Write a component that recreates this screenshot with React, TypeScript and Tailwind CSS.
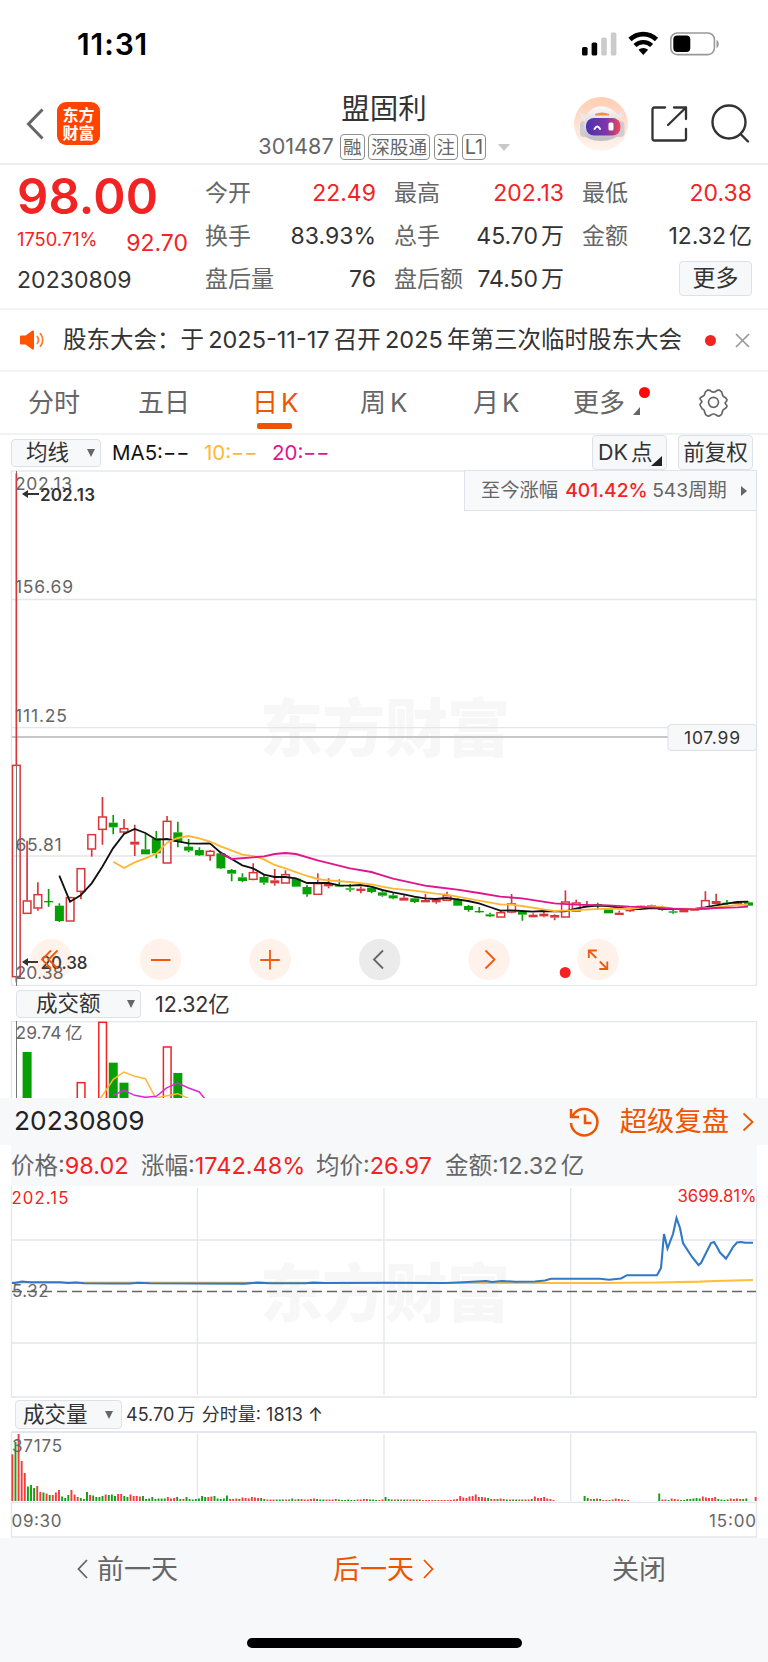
import type { ReactNode } from 'react'

type Tone = 'r' | 'g'

const RED = '#d9363a'
const GREEN = '#06a006'
const GRID = '#e3e6ec'

// Candles: tone, high, body top, body bottom, low (3 units per pixel)
const CANDLES: [Tone, number, number, number, number][] = [
  ['r', -800, 75, 711, 727], ['r', 302, 482, 521, 521], ['r', 427, 463, 505, 512],
  ['g', 447, 483, 486, 500], ['g', 490, 497, 543, 546], ['r', 470, 472, 544, 544],
  ['r', 385, 385, 455, 478], ['r', 283, 283, 328, 350], ['r', 171, 230, 269, 314],
  ['g', 225, 248, 262, 283], ['r', 237, 265, 277, 283], ['r', 254, 305, 314, 348],
  ['g', 280, 328, 343, 343], ['g', 273, 295, 340, 355], ['r', 228, 243, 370, 370],
  ['g', 245, 277, 305, 322], ['g', 297, 320, 332, 337], ['g', 322, 330, 346, 348],
  ['r', 330, 333, 347, 362], ['g', 335, 340, 385, 387], ['g', 387, 390, 401, 424],
  ['g', 400, 412, 423, 427], ['r', 370, 397, 419, 421], ['g', 405, 411, 428, 434],
  ['r', 387, 421, 430, 437], ['r', 391, 403, 430, 430], ['g', 414, 416, 440, 440],
  ['g', 435, 441, 463, 470], ['r', 400, 430, 464, 464], ['r', 415, 430, 439, 445],
  ['g', 418, 436, 440, 440], ['g', 432, 445, 449, 455], ['r', 440, 446, 453, 460],
  ['g', 440, 443, 456, 460], ['g', 452, 457, 467, 470], ['g', 460, 466, 475, 478],
  ['r', 466, 473, 482, 482], ['g', 472, 475, 486, 489], ['r', 462, 480, 487, 487],
  ['r', 475, 479, 487, 491], ['r', 455, 466, 482, 482], ['g', 475, 480, 497, 497],
  ['g', 495, 498, 510, 515], ['g', 501, 513, 516, 518], ['g', 518, 523, 529, 531],
  ['r', 510, 517, 532, 532], ['r', 462, 491, 517, 520], ['g', 512, 516, 524, 542],
  ['r', 520, 524, 532, 532], ['r', 512, 521, 529, 532], ['r', 523, 525, 533, 541],
  ['r', 451, 485, 532, 532], ['r', 479, 488, 514, 514], ['r', 483, 497, 500, 502],
  ['g', 488, 492, 497, 508], ['g', 506, 508, 520, 520], ['r', 512, 518, 525, 525],
  ['r', 507, 509, 514, 516], ['r', 496, 497, 502, 502], ['g', 494, 496, 500, 500],
  ['g', 497, 506, 510, 512], ['g', 508, 514, 517, 521], ['r', 508, 510, 517, 517],
  ['r', 505, 507, 512, 512], ['r', 454, 481, 507, 509], ['r', 461, 483, 492, 492],
  ['g', 480, 488, 491, 494], ['r', 483, 485, 492, 494], ['g', 484, 487, 497, 497],
]

const MA5 =
  '178,407 210,485 242,466 275,430 307,380 339,325 372,282 404,267 436,279 469,299 501,297 533,304 566,310 598,311 630,310 662,338 695,357 727,376 759,385 792,404 824,411 856,411 888,415 921,429 985,429 1018,436 1050,437 1082,435 1114,440 1147,450 1179,457 1211,463 1243,470 1275,475 1307,477 1340,474 1372,478 1404,483 1437,490 1469,501 1501,512 1534,511 1566,513 1598,515 1630,513 1695,514 1727,506 1760,500 1792,497 1824,498 1857,503 1889,507 1921,507 1953,504 2018,507 2083,507 2115,502 2147,496 2180,491 2212,486 2244,485'
const MA10 =
  '340,365 372,384 404,367 436,355 469,341 501,308 533,294 566,288 598,295 630,305 662,319 727,344 759,348 792,358 824,375 856,385 921,408 953,417 985,421 1050,426 1114,433 1147,440 1179,446 1243,452 1307,461 1340,464 1372,470 1437,482 1501,493 1534,494 1566,498 1630,508 1663,513 1695,512 1760,509 1824,506 1889,507 1953,499 1986,501 2018,505 2083,507 2147,502 2212,495 2244,493'
const MA20 =
  '662,340 695,357 759,352 792,349 824,342 856,339 888,342 953,361 1050,385 1114,396 1147,406 1179,416 1275,437 1307,441 1372,449 1437,459 1501,470 1566,475 1663,490 1727,494 1824,496 1889,500 1953,502 2018,506 2083,508 2147,504 2212,502 2244,500'

const PRICE =
  '12,97 15,97 22,95.5 30,96.3 60,96.3 68,97 76,96.5 84,97.2 113,97.5 130,97.5 138,96.7 150,97.2 245,97.6 258,96.6 270,97.3 305,97.2 313,96.6 325,97 384,96.7 445,97 463,96.2 486,95 492,96 502,95 515,95.7 535,95.5 545,94.5 551,92.7 600,92.8 609,93.7 621,92.5 627,89.2 657,89.2 661,82 664,48 667.5,62.5 673,48 676.5,32 680,42 683,57 692,71 698.5,79 701,77 705,69 711,57 714,56 717,61 720,66.5 726,72.5 729,68 733,61 737,56.5 741,56 745,56.7 753,56.7'

// Per-minute turnover: tone + height, "-" for a minute with no trade
const MINUTES =
  'r46.7 g59 r67 r40 r28 g14.5 g16 g13 r15 r9 g8.5 r7.5 g6 r6 r8.5 r11 g4.5 g3 g6 r11 r6.5 r4 g3 g2 g9 r6 g5.5 g4 g4 g5 r6.5 g6 g6.5 g5 r7 r7 g5 g4 r6.5 r5 r5 r4.5 g5 g2 g2.5 g4 g2 g2.5 g2.5 g2.5 r4 r2.5 r3 g4 g2 r2 g4 g2 g1.5 g2 g2.5 g5 g4 r4 r4.5 g5 g2.5 g2 g2.5 g5.5 r2 r2 r2.5 g2 r3.5 r3 r2.5 r4 r3.5 r3 g3 g2 r1.5 r1.5 r1.5 g1.5 g1.5 g1.5 r1.5 g1.5 g2.5 r1.5 g2 r2 r1.5 r1.5 r2 r2.5 g2 g1.5 g1.5 r1.5 r1.5 r1.5 r2 g1.5 g1 g1 g1.5 g1 g1 r1.5 r1.5 r2 r2 g1.5 g1.5 g1 r1 r1.5 g4 g2 g1.5 r1.5 g1.5 r1.5 g1.5 r1.5 r1.5 g1.5 r1.5 g1.5 r1 r1 r1 r1 g1 r1 r1 r1 r1 r1 r1.5 r2 r5 r3.5 r3 r4.5 r5 r6.5 r4 r4 r3.5 g3 r2 r2 g2 r2.5 r2 g1.5 r1.5 g1.5 g1.5 r1.5 g1.5 r1.5 r1.5 g2 r4.5 r3 r3 r4 r2.5 r2 r1 - - - - - - - - - g5 g3 r2 g2 r2.5 g2 r1 r1 g1 r1.5 r2.5 r2 r1.5 g1 r1 - - - - - - - - - g7.5 r1.5 r1.5 g1 r2.5 r2 r1.5 g1 g1 g2 g2 g2.5 g3 g2.5 r4.5 r3.5 r3 r3 r4 g2 g1.5 g1 g1.5 r2.5 r2 r2.5 r2 g2 g2.5 - - r4'

const QUOTE: { label: string; value: string; unit?: string; red?: boolean }[] = [
  { label: '今开', value: '22.49', red: true },
  { label: '最高', value: '202.13', red: true },
  { label: '最低', value: '20.38', red: true },
  { label: '换手', value: '83.93%' },
  { label: '总手', value: '45.70', unit: '万' },
  { label: '金额', value: '12.32', unit: '亿' },
  { label: '盘后量', value: '76' },
  { label: '盘后额', value: '74.50', unit: '万' },
]

function StatusBar() {
  return (
    <div className="flex h-[84px] items-start justify-between pt-[29px] pr-[48px] pl-[77px]">
      <span className="text-[30px] leading-[30px] font-semibold tracking-[0.900px] text-black">11:31</span>
      <svg width="138" height="30" viewBox="582 29 138 30">
        <rect x="582" y="47" width="5.6" height="8.5" rx="1.6" />
        <rect x="591.6" y="42.5" width="5.6" height="13" rx="1.6" />
        <rect x="601.2" y="37.5" width="5.6" height="18" rx="1.6" fill="#cbcbcb" />
        <rect x="610.8" y="32.5" width="5.6" height="23" rx="1.6" fill="#cbcbcb" />
        <path d="M630 39.500a19 19 0 0 1 26.500 0" fill="none" stroke="#000" strokeWidth="4.600" />
        <path d="M635 45.500a12 12 0 0 1 16.600 0" fill="none" stroke="#000" strokeWidth="4.400" />
        <path d="M638.500 49.800a7 7 0 0 1 9.600 0L643.300 55z" />
        <rect x="670.800" y="33" width="43.600" height="21.600" rx="6.500" fill="none" stroke="#999" strokeWidth="1.600" />
        <rect x="673.300" y="35.500" width="17" height="16.600" rx="4" />
        <path d="M716.500 40v8c3-1 3-7 0-8z" fill="#999" />
      </svg>
    </div>
  )
}

function Robot() {
  return (
    <svg width="54" height="54" viewBox="0 0 54 54">
      <defs>
        <linearGradient id="halo" x2="0" y2="1">
          <stop stopColor="#ffcdb2" />
          <stop offset="1" stopColor="#fff5f0" />
        </linearGradient>
        <linearGradient id="visor">
          <stop stopColor="#4a32b0" />
          <stop offset=".6" stopColor="#8036a8" />
          <stop offset="1" stopColor="#f04858" />
        </linearGradient>
        <linearGradient id="shell" x2="0" y2="1">
          <stop stopColor="#fbf9f9" />
          <stop offset="1" stopColor="#bdbbc2" />
        </linearGradient>
      </defs>
      <circle cx="27" cy="27" r="27" fill="url(#halo)" />
      <path d="M6 13q1 5 7 5l-2 6Q4 19 6 13zM48 13q-1 5-7 5l2 6q7-5 5-11z" fill="#ece8e8" />
      <rect x="6" y="24" width="9" height="16" rx="4" fill="#cfccd2" />
      <rect x="41" y="24" width="9.500" height="16" rx="4" fill="#cfccd2" />
      <path d="M10.500 25Q13 10 27 9.500 43 10 46 25l.5 11q-6 8-19.500 8T8.500 36z" fill="url(#shell)" />
      <path d="M21 17q7-3 14 0v1.500H21z" fill="#ef9048" />
      <rect x="12" y="21" width="34.500" height="17.500" rx="8" fill="url(#visor)" />
      <path d="M20.500 32q2.800-5 5.600 0" fill="none" stroke="#fff" strokeWidth="1.800" strokeLinecap="round" />
      <rect x="34.500" y="25.500" width="5" height="8" rx="1.500" fill="#fff" />
    </svg>
  )
}

function Tag({ children }: { children: ReactNode }) {
  return (
    <span className="flex h-[26px] items-center rounded-[4px] border border-[#8f8f8f] px-[2px] text-[18.600px] leading-none text-[#666]">
      {children}
    </span>
  )
}

function Header() {
  return (
    <header className="grid h-[81px] grid-cols-[240px_1fr_240px] border-b-2 border-[#ececec]">
      <div className="flex items-start pt-[18px] pl-[26px]">
        <svg className="mt-[6px] mr-[13px]" width="18" height="32" viewBox="0 0 18 32" fill="none" stroke="#666" strokeWidth="3">
          <path d="M16.500 1.500 2.500 16l14 14.500" />
        </svg>
        <div className="flex h-[43px] w-[43px] flex-col items-center justify-center rounded-[9px] bg-[#ff4400] text-[16px] leading-[18px] font-bold text-white">
          <span>东方</span>
          <span>财富</span>
        </div>
      </div>
      <div className="flex flex-col items-center pt-[10px]">
        <h1 className="text-[28.500px] leading-[30px] text-[#333]">盟固利</h1>
        <div className="mt-[10px] flex items-center gap-[3.500px] text-[#666]">
          <span className="mr-[3px] text-[21.600px] leading-none">301487</span>
          <Tag>融</Tag>
          <Tag>深股通</Tag>
          <Tag>注</Tag>
          <Tag>
            <span className="text-[20px]">L1</span>
          </Tag>
          <svg className="ml-[8px]" width="12" height="7" viewBox="0 0 12 7" fill="#c8c8c8">
            <path d="M0 0h12L6 7z" />
          </svg>
        </div>
      </div>
      <div className="flex items-start pt-[13px] pl-[46px]">
        <Robot />
        <svg className="mt-[8px] ml-[22px]" width="38" height="38" viewBox="0 0 38 38" fill="none" stroke="#333" strokeWidth="2.300" strokeLinecap="round" strokeLinejoin="round">
          <path d="M15 2.500H4.500q-2 0-2 2v29q0 2 2 2h29.500q2 0 2-2V24M24 2.500h12V14M36 2.500 18 20" />
        </svg>
        <svg className="mt-[7px] ml-[23px]" width="39" height="40" viewBox="0 0 39 40" fill="none" stroke="#333" strokeWidth="2.400" strokeLinecap="round">
          <circle cx="18" cy="18" r="16.500" />
          <path d="m29.500 30 7.500 7.500" />
        </svg>
      </div>
    </header>
  )
}

function Quote() {
  return (
    <section className="flex h-[145px] border-b-2 border-[#f4f4f4]">
      <div className="w-[188px] shrink-0 pt-[8px] pl-[17px]">
        <div className="text-[49px] leading-[48px] font-semibold tracking-[0.100px] text-[#f22323]">98.00</div>
        <div className="mt-[8px] flex h-[28px] items-center justify-between text-[#f22323]">
          <span className="mt-[-8px] text-[18.300px] leading-none">1750.71%</span>
          <span className="text-[23px] leading-none">92.70</span>
        </div>
        <div className="mt-[10px] text-[23px] leading-[26px] tracking-[0.050px] text-[#333]">20230809</div>
      </div>
      <div className="ml-[17px] grid w-[548px] grid-cols-[171px_170px_170px] grid-rows-[43px_43px_43px] gap-x-[18px] pt-[7px]">
        {QUOTE.map((q) => (
          <div key={q.label} className="flex items-center justify-between text-[23px] leading-none whitespace-nowrap">
            <span className="text-[#666]">{q.label}</span>
            <span className={q.red ? 'text-[#f22323]' : 'text-[#333]'}>
              {q.value}
              {q.unit && <span className="ml-[3px]">{q.unit}</span>}
            </span>
          </div>
        ))}
        <div className="flex items-center justify-end">
          <button className="-mt-[3px] h-[35px] w-[73px] rounded-[4px] border border-[#dde1e8] bg-[#f7f8fa] text-[23px] leading-none text-[#333]">
            更多
          </button>
        </div>
      </div>
    </section>
  )
}

function Notice() {
  return (
    <section className="flex h-[62px] items-center border-b-2 border-[#f4f4f4] pl-[20px]">
      <svg width="24" height="20" viewBox="0 0 24 20" fill="#ff5500">
        <path d="M1 5.500h4.500L12.500.5q1.500-.5 1.500 1v17q0 1.500-1.500 1L5.500 14.500H1q-1 0-1-1v-7q0-1 1-1z" />
        <path d="M17 6q3 4 0 8M20 3q5.500 7 0 14" fill="none" stroke="#ff7a30" strokeWidth="1.700" />
      </svg>
      <span className="ml-[19px] w-[619px] text-[23.500px] leading-none whitespace-nowrap text-[#333] [word-spacing:-2.400px]">
        股东大会：于 2025-11-17 召开 2025 年第三次临时股东大会
      </span>
      <span className="ml-[23px] h-[11px] w-[11px] rounded-full bg-[#f22323]" />
      <svg className="ml-[19px]" width="15" height="15" viewBox="0 0 15 15" stroke="#999" strokeWidth="1.700">
        <path d="m1 1 13 13M14 1 1 14" />
      </svg>
    </section>
  )
}

function Tabs() {
  const tab = 'relative w-[110px] shrink-0 text-[26px] leading-[62px] text-[#666]'
  return (
    <nav className="flex h-[63px] border-b-2 border-[#f2f2f2] pl-[28px]">
      <span className={tab}>分时</span>
      <span className={tab}>五日</span>
      <span className="relative ml-[4px] w-[108px] shrink-0 text-[26px] leading-[62px] text-[#ee5500]">
        日<span className="ml-[3px]">K</span>
        <i className="absolute bottom-[4px] left-[5px] h-[6px] w-[35px] rounded-[2px] bg-[#ee5500]" />
      </span>
      <span className={tab}>
        周<span className="ml-[4px]">K</span>
      </span>
      <span className="relative ml-[3px] w-[100px] shrink-0 text-[26px] leading-[62px] text-[#666]">
        月<span className="ml-[3px]">K</span>
      </span>
      <span className={tab}>
        更多
        <i className="absolute top-[15px] left-[66px] h-[10.500px] w-[10.500px] rounded-full bg-[#ff0a0a]" />
        <svg className="absolute top-[35px] left-[60px]" width="7" height="8" viewBox="0 0 7 8" fill="#666">
          <path d="M7 0v8H0z" />
        </svg>
      </span>
      <svg className="mt-[16px] ml-[15px]" width="31" height="30" viewBox="0 0 31 30" fill="none" stroke="#666" strokeWidth="1.700">
        <path strokeLinejoin="round" d="M9.500 2.200q2.200-.5 3.500 1 2.500 1.800 5 0 1.300-1.500 3.500-1 2.500 1.200 2.700 3.300.2 3 2.600 3.800 1.700 1 2.200 2.500 0 1-1.300 2.300-1.200 1 0 2 1.300 1.200 1.300 2.200-.5 1.500-2.200 2.500-2.400.8-2.600 3.800-.2 2.100-2.700 3.300-2.200.5-3.500-1-2.500-1.800-5 0-1.300 1.500-3.500 1-2.500-1.200-2.700-3.300-.2-3-2.600-3.800Q2.500 18.300 2 16.800q0-1 1.300-2.200 1.200-1 0-2Q2 11.300 2 10.300q.5-1 2.200-1.700 2.400-.6 2.600-3.100.2-2.100 2.700-3.300z" />
        <circle cx="15.500" cy="14.300" r="5" />
      </svg>
    </nav>
  )
}

const selectBox =
  'flex shrink-0 items-center justify-between rounded-[4px] border border-[#dde1e8] bg-[#f7f8fa] leading-none text-[#333] text-[21.500px]'

function Caret() {
  return (
    <svg width="8" height="8" viewBox="0 0 8 8" fill="#666">
      <path d="M0 0h8L4 8z" />
    </svg>
  )
}

function MaBar() {
  const mas = [
    { name: 'MA5:', tone: 'w-[92px] text-[#111]' },
    { name: '10:', tone: 'w-[68px] text-[#ffb733]' },
    { name: '20:', tone: 'text-[#e0148c]' },
  ]
  return (
    <div className="flex h-[35px] items-center pr-[15px] pl-[11px]">
      <div className={`${selectBox} mt-px h-[28px] w-[90px] pr-[5px] pl-[14px]`}>
        均线
        <Caret />
      </div>
      <div className="mt-[2px] ml-[11px] flex text-[20.500px] leading-none whitespace-nowrap">
        {mas.map((m) => (
          <span key={m.name} className={m.tone}>
            {m.name}
            <span className="inline-block origin-left scale-x-[1.400]">--</span>
          </span>
        ))}
      </div>
      <div className="ml-auto flex h-full gap-[11px]">
        <div className={`${selectBox} relative h-full w-[75px] justify-start pl-[5px]`}>
          DK<span className="ml-[3px]">点</span>
          <svg className="absolute right-[4px] bottom-[3px]" width="11" height="10" viewBox="0 0 11 10" fill="#222">
            <path d="M11 0v10H0z" />
          </svg>
        </div>
        <div className={`${selectBox} h-full w-[75px]`}>
          <span className="mx-auto">前复权</span>
        </div>
      </div>
    </div>
  )
}

function Watermark({ y }: { y: number }) {
  return (
    <text x="260" y={y} textLength="250" fontSize="63" fontWeight="900" fill="#f7f7f7" fontFamily="Noto Sans CJK SC">
      东方财富
    </text>
  )
}

function CandleChart() {
  return (
    <div className="relative h-[516px]">
      <svg className="block" width="768" height="516" viewBox="0 470 768 516" fill="none">
        <Watermark y={751} />
        <g stroke={GRID} strokeWidth="1.300">
          <path d="M11.500 599.500h745M11.500 727.700h745M11.500 856h745" />
          <rect x="11.500" y="471" width="745" height="514.500" />
        </g>
        <path d="M12 737h656" stroke="#b5b5b5" strokeWidth="1.300" />
        <path d="M16.500 471v515" stroke="#777" />
        <g transform="translate(0 740) scale(.33333)">
          {CANDLES.map(([tone, high, top, bottom, low], i) => {
            const x = 49 + 32.3 * i
            const hollow = tone === 'r' && bottom - top > 9
            const color = tone === 'r' ? RED : GREEN
            return (
              <g key={i} stroke={color}>
                <path d={`M${x} ${high}V${top}M${x} ${bottom}V${low}`} strokeWidth="5" />
                {hollow ? (
                  <rect x={x - 11.5} y={top + 1} width="23" height={bottom - top - 2} strokeWidth="4.500" />
                ) : (
                  <rect x={x - 13.5} y={top} width="27" height={Math.max(bottom - top, 4)} fill={color} stroke="none" />
                )}
              </g>
            )
          })}
          <polyline points={MA5} stroke="#111" strokeWidth="5.500" />
          <polyline points={MA10} stroke="#ffb733" strokeWidth="5.500" />
          <polyline points={MA20} stroke="#e0148c" strokeWidth="5.500" />
        </g>
        <path d="M16.500 765v221" stroke="#777" />
        <g fill="#666" fontSize="17.500">
          <text x="15" y="490" textLength="57">202.13</text>
          <text x="15" y="593" textLength="58">156.69</text>
          <text x="15" y="722" textLength="52">111.25</text>
          <text x="15.500" y="850.500" textLength="46">65.81</text>
          <text x="15.500" y="979" textLength="48">20.38</text>
        </g>
        <g fill="#333" fontSize="17" fontWeight="600">
          <text x="40" y="500.500" textLength="55">202.13</text>
          <text x="40.500" y="968.500" textLength="47" fontWeight="500">20.38</text>
        </g>
        <path d="M23 494h16M23 962h15" stroke="#333" strokeWidth="1.800" />
        <path d="m22 494 6-4v8zM22 962l6-4v8z" fill="#333" />
        <rect x="668" y="724.500" width="88.500" height="26" rx="3" fill="#f7f8fa" stroke="#dcdfe5" />
        <text x="684" y="744" textLength="56" fill="#333" fontSize="17.500">107.99</text>
        <g fill="#ee5500" fillOpacity=".08">
          <circle cx="51.300" cy="959.500" r="20.700" />
          <circle cx="160.500" cy="959.500" r="20.700" />
          <circle cx="270.300" cy="959.500" r="20.700" />
          <circle cx="489" cy="959.500" r="20.700" />
          <circle cx="598.200" cy="959.500" r="20.700" />
        </g>
        <circle cx="379.700" cy="959.500" r="20.700" fill="#ebebeb" />
        <g stroke="#ee5a10" strokeWidth="1.800">
          <path d="m51 950.500-9 9 9 9M57.500 950.500l-9 9 9 9" />
          <path d="M151 960h19.500M260.300 960h19.500M270 950v19.500" />
          <path d="m485.500 950.500 9 9-9 9" />
          <path d="M588.800 958v-7.500h8M588.800 950.500l7.500 7.500M607.300 961.500v7.500h-8M607.300 969l-7.500-7.500" />
        </g>
        <path d="m383 950.500-9 9 9 9" stroke="#666" strokeWidth="1.800" />
        <circle cx="565.200" cy="972.500" r="5.500" fill="#f22323" />
      </svg>
      <div className="absolute top-0 right-[11px] flex h-[41px] w-[293px] items-center border border-[#e0e3ea] bg-[#f8f9fb] pl-[16px] text-[19.300px] leading-none whitespace-nowrap text-[#666]">
        至今涨幅
        <b className="mx-[7px] w-[80px] font-medium text-[#f22323]">401.42%</b>
        543周期
        <svg className="ml-[14px]" width="6" height="10" viewBox="0 0 6 10" fill="#666">
          <path d="M0 0v10l6-5z" />
        </svg>
      </div>
    </div>
  )
}

function TurnoverPane() {
  const bars: [number, Tone, number][] = [
    [1, 'g', 366], [6, 'r', 458], [8, 'r', 277], [9, 'g', 398], [10, 'g', 458], [14, 'r', 351], [15, 'g', 429],
  ]
  return (
    <>
      <div className="flex h-[35px] items-center pl-[16px]">
        <div className={`${selectBox} mt-px h-[28px] w-[125px] pr-[5px] pl-[19px]`}>
          成交额
          <Caret />
        </div>
        <span className="mt-[2px] ml-[14px] text-[21.500px] leading-none tracking-[-0.100px] text-[#333]">12.32亿</span>
      </div>
      <svg className="block" width="768" height="77" viewBox="0 1021 768 77" fill="none">
        <path d="M11.500 1098v-76.500h745v76.500" stroke={GRID} strokeWidth="1.300" />
        <path d="M16.500 1021v77" stroke="#777" />
        <text x="15.500" y="1039" textLength="46" fill="#666" fontSize="17.500">29.74</text>
        <text x="65" y="1039" fill="#666" fontSize="17.500">亿</text>
        <g transform="translate(0 930) scale(.33333)">
          {bars.map(([i, tone, top]) =>
            tone === 'g' ? (
              <rect key={i} x={35.5 + 32.3 * i} y={top} width="27" height="200" fill={GREEN} />
            ) : (
              <rect key={i} x={38 + 32.3 * i} y={top} width="23" height="260" stroke="#f22323" strokeWidth="4.500" />
            ),
          )}
          <polyline points="301,506 340,448 372,426 404,439 436,446 467,504 501,497 533,491 568,506" stroke="#ffb733" strokeWidth="4.500" />
          <polyline points="340,496 372,481 404,496 436,502 469,499 501,473 533,459 566,474 598,486 614,506" stroke="#dc28dc" strokeWidth="4.500" />
        </g>
      </svg>
    </>
  )
}

function DayHeader() {
  const stats = [
    { label: '价格', value: '98.02', box: 'w-[130px]', tone: 'text-[#f22323]' },
    { label: '涨幅', value: '1742.48%', box: 'w-[175px]', tone: 'text-[#f22323]' },
    { label: '均价', value: '26.97', box: 'w-[129px]', tone: 'text-[#f22323]' },
    { label: '金额', value: '12.32', unit: '亿', box: '', tone: '' },
  ]
  return (
    <>
      <div className="flex h-[47px] items-center bg-[#f7f8fa] pr-[14px] pl-[14px]">
        <span className="text-[26.300px] leading-none text-[#222]">20230809</span>
        <svg className="ml-auto" width="32" height="32" viewBox="0 0 32 32" fill="none" stroke="#ee5500" strokeWidth="2.500">
          <path d="M4.500 10A13.200 13.200 0 1 1 3 17M3 3v8h8M17 8.500V17h6.500" />
        </svg>
        <span className="ml-[20px] text-[27.300px] leading-none text-[#ee5500]">超级复盘</span>
        <svg className="ml-[13px]" width="12" height="20" viewBox="0 0 12 20" fill="none" stroke="#ee5500" strokeWidth="1.800">
          <path d="m1.500 1.500 9 8.500-9 8.500" />
        </svg>
      </div>
      <div className="mx-[11px] flex h-[41px] items-center bg-[#f7f8fa] text-[23.500px] leading-none whitespace-nowrap text-[#666]">
        {stats.map((s) => (
          <span key={s.label} className={s.box}>
            {s.label}:<span className={s.tone}>{s.value}</span>
            {s.unit && <span className="ml-[3px]">{s.unit}</span>}
          </span>
        ))}
      </div>
    </>
  )
}

function MinuteChart() {
  return (
    <svg className="block" width="768" height="212" viewBox="0 0 768 212" fill="none">
      <g stroke={GRID} strokeWidth="1.300">
        <path d="M11.500 54h745M11.500 157h745" strokeWidth="1.700" />
        <path d="M197.500 2v207M384 2v207M570.700 2v207" />
        <path d="M11.500 0v211h745V0" />
      </g>
      <Watermark y={130} />
      <polyline points="12,96.500 445,97 600,97 660,96.500 700,95.700 715,95 753,94" stroke="#ffbe3c" strokeWidth="2.200" />
      <polyline points={PRICE} stroke="#3078c8" strokeWidth="2.100" />
      <path d="M12 105.500h744" stroke="#666" strokeWidth="1.300" strokeDasharray="10 5" />
      <g fontSize="16.800">
        <text x="11.500" y="17.500" textLength="57" fill="#f22323">202.15</text>
        <text x="677.500" y="16" textLength="79" fill="#f22323">3699.81%</text>
        <text x="12" y="111" textLength="36.500" fill="#666">5.32</text>
      </g>
    </svg>
  )
}

function MinuteVolume() {
  return (
    <>
      <div className="flex h-[33px] items-center pl-[15px]">
        <div className={`${selectBox} h-[29px] w-[107px] pr-[8px] pl-[7px]`}>
          成交量
          <Caret />
        </div>
        <span className="mt-px ml-[4px] text-[18px] leading-none text-[#333]">
          45.70<span className="mr-[1.500px] ml-[3px]">万</span> 分时量: 1813 ↑
        </span>
      </div>
      <svg className="block" width="768" height="107" viewBox="0 1431 768 107" fill="none">
        <g stroke={GRID} strokeWidth="1.300">
          <path d="M11.500 1432h745" strokeWidth="2" />
          <path d="M11.500 1432v105h745v-105M11.500 1502.300h745M197.500 1434v67M384 1434v67M570.700 1434v67" />
        </g>
        {MINUTES.split(' ').map((m, i) => {
          if (m === '-') return null
          const h = Number(m.slice(1))
          return <rect key={i} x={11.4 + i * 3.11} y={1501 - h} width="1.900" height={h} fill={m[0] === 'r' ? '#f83a3a' : '#10a010'} />
        })}
        <g fill="#666" fontSize="17">
          <text x="12" y="1452" textLength="50">37175</text>
          <text x="11.500" y="1526.500" textLength="50">09:30</text>
          <text x="709" y="1526.500" textLength="47">15:00</text>
        </g>
      </svg>
    </>
  )
}

function Footer() {
  return (
    <footer className="flex h-[124px] flex-col items-center bg-[#f7f8fa] text-[27px] leading-none text-[#666]">
      <div className="grid h-[62px] w-full grid-cols-3 items-center">
        <span className="flex items-center gap-[9px] pl-[77px]">
          <svg width="11" height="20" viewBox="0 0 11 20" fill="none" stroke="#666" strokeWidth="1.800">
            <path d="m10 1-8.500 9L10 19" />
          </svg>
          前一天
        </span>
        <span className="flex items-center gap-[9px] pl-[77px] text-[#ee5500]">
          后一天
          <svg width="11" height="20" viewBox="0 0 11 20" fill="none" stroke="#ee5500" strokeWidth="1.800">
            <path d="m1 1 8.500 9L1 19" />
          </svg>
        </span>
        <span className="pl-[100px]">关闭</span>
      </div>
      <div className="mt-[38px] h-[10px] w-[275px] rounded-full bg-black" />
    </footer>
  )
}

export default function App() {
  return (
    <div className="h-[1662px] w-[768px] overflow-hidden bg-white font-[Inter,'Noto_Sans_CJK_SC',sans-serif]">
      <StatusBar />
      <Header />
      <Quote />
      <Notice />
      <Tabs />
      <MaBar />
      <CandleChart />
      <TurnoverPane />
      <DayHeader />
      <MinuteChart />
      <MinuteVolume />
      <Footer />
    </div>
  )
}
